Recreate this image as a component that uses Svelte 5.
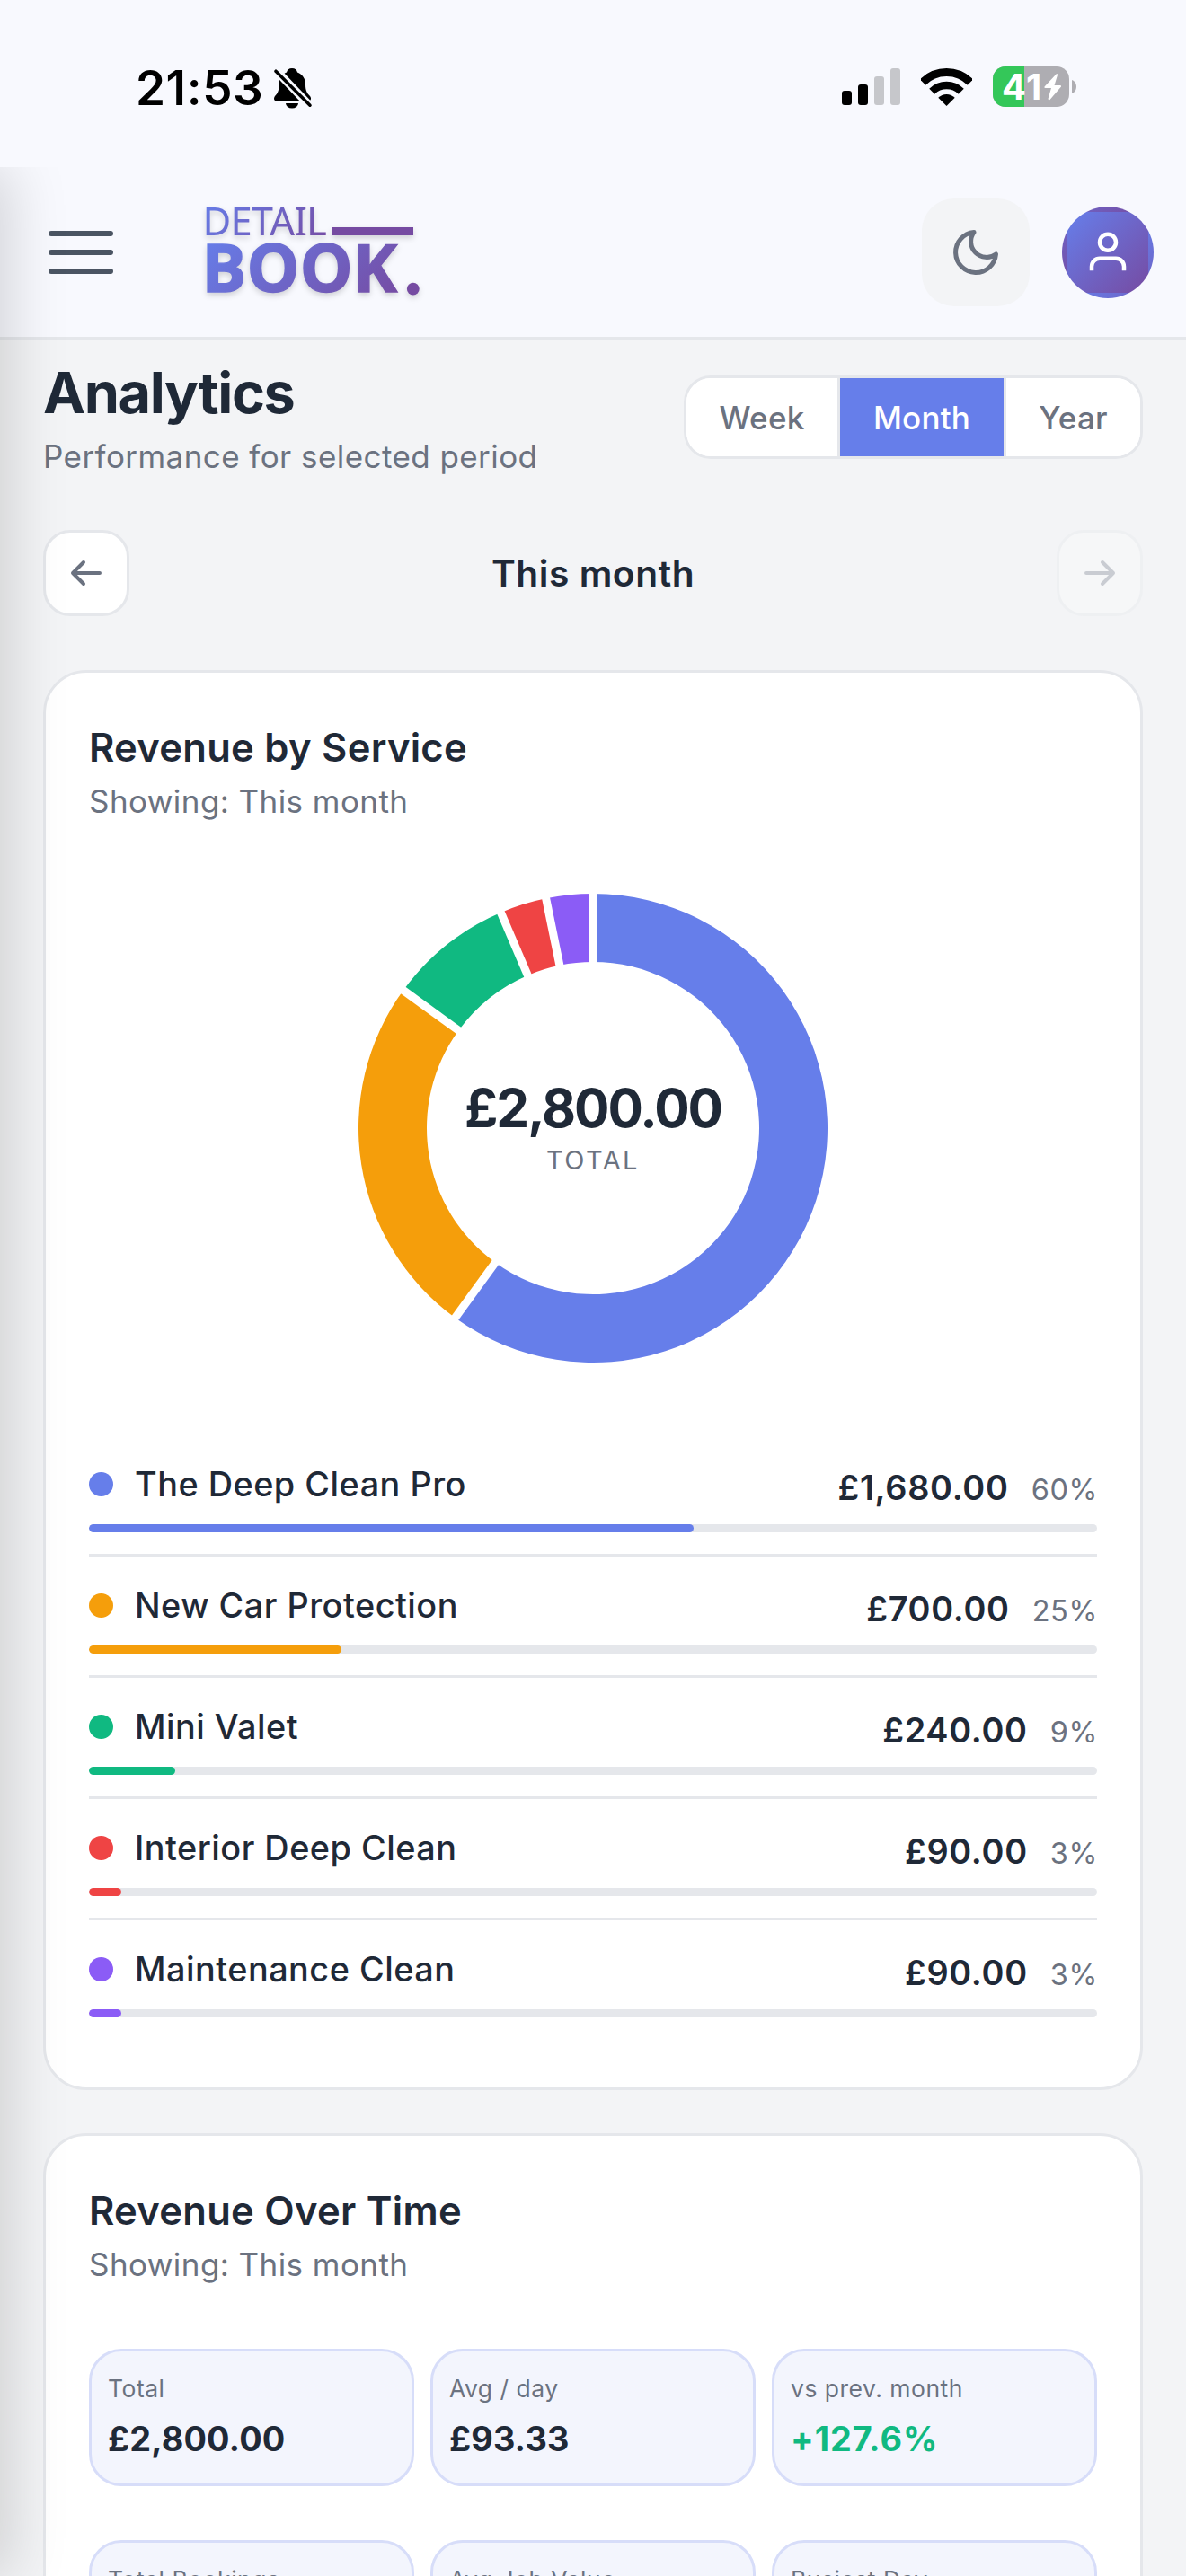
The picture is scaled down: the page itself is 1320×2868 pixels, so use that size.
<script>
    const periods = ['Week', 'Month', 'Year'];
    let active = 'Month';

    const services = [
        { name: 'The Deep Clean Pro', amount: 1680, color: '#667eea' },
        { name: 'New Car Protection', amount: 700, color: '#f59e0b' },
        { name: 'Mini Valet', amount: 240, color: '#10b981' },
        { name: 'Interior Deep Clean', amount: 90, color: '#ef4444' },
        { name: 'Maintenance Clean', amount: 90, color: '#8b5cf6' },
    ];

    const stats = [
        { label: 'Total', value: '£2,800.00' },
        { label: 'Avg / day', value: '£93.33' },
        { label: 'vs prev. month', value: '+127.6%', positive: true },
    ];

    // values of this row sit below the fold
    const moreStats = [
        { label: 'Total Bookings' },
        { label: 'Avg Job Value' },
        { label: 'Busiest Day' },
    ];

    const total = services.reduce((sum, s) => sum + s.amount, 0);
    const money = (n) => '£' + n.toLocaleString('en-GB', { minimumFractionDigits: 2 });
    const share = (n) => (n / total) * 100;

    // donut geometry
    const size = 522;
    const c = size / 2;
    const outer = 261;
    const inner = 185;

    const point = (r, turn) => {
        const a = turn * Math.PI * 2 - Math.PI / 2;
        return [c + r * Math.cos(a), c + r * Math.sin(a)];
    };

    const slicePath = (from, to) => {
        const large = to - from > 0.5 ? 1 : 0;
        return `M${point(outer, from)} A${outer} ${outer} 0 ${large} 1 ${point(outer, to)} L${point(inner, to)} A${inner} ${inner} 0 ${large} 0 ${point(inner, from)}Z`;
    };

    let turn = 0;
    const slices = services.map((s) => {
        const from = turn;
        turn += s.amount / total;
        return { color: s.color, d: slicePath(from, turn), gap: `M${point(inner - 4, from)} L${point(outer + 4, from)}` };
    });
</script>

<div class="screen">
    <div class="statusBar">
        <span class="time">21:53</span>
        <svg class="bell" width="44" height="47" viewBox="0 0 44 47">
            <path d="M21 1C24.500 1 26.500 3 27 5.500C33 8 36 13 36 19.500C36 26 38 29 41 32C43 34.500 42 37.500 39 37.500H4C1 37.500 .2 34.500 2 32C5 29 6.500 26 6.500 19.500C6.500 13 9 8 15 5.500C15.500 3 17.500 1 21 1Z" />
            <path d="M14 40h14a7 5.500 0 0 1-14 0z" />
            <path class="halo" d="M0 0L43 45" />
            <path class="slash" d="M3 4.200L41 42.200" />
        </svg>
        <div class="statusIcons">
            <svg width="65" height="41" viewBox="0 0 65 41">
                <rect x="0" y="25" width="11" height="16" rx="3" />
                <rect x="18" y="18" width="11" height="23" rx="3" />
                <rect x="36" y="9" width="11" height="32" rx="3" fill="#c6c7cb" />
                <rect x="54" y="0" width="11" height="41" rx="3" fill="#c6c7cb" />
            </svg>
            <svg width="57" height="42" viewBox="0 0 57 42">
                <clipPath id="fan"><path d="M28.500 42L-14 -.5H71Z" /></clipPath>
                <g clip-path="url(#fan)">
                    <circle cx="28.500" cy="42" r="37.500" fill="none" stroke="#000" stroke-width="9" />
                    <circle cx="28.500" cy="42" r="23" fill="none" stroke="#000" stroke-width="8.500" />
                    <circle cx="28.500" cy="42" r="13" />
                </g>
            </svg>
            <svg width="93" height="45" viewBox="0 0 93 45">
                <clipPath id="cell"><rect width="85" height="45" rx="14" /></clipPath>
                <g clip-path="url(#cell)">
                    <rect width="85" height="45" fill="#aeadb2" />
                    <rect width="35" height="45" fill="#34c759" />
                </g>
                <path d="M88 15c3 1 5 4 5 7.500s-2 6.500-5 7.500z" fill="#aeadb2" />
                <text class="charge" x="10" y="37">41</text>
                <path d="M71 8L57.500 22.500Q57 24 58.500 24H65L61.500 36Q62 38 63.500 37L76 22.500Q76.500 21 75 21H68.500L72 9.500Q72 7.500 71 8Z" fill="#fff" />
            </svg>
        </div>
    </div>

    <div class="page">
        <header class="topBar">
            <div class="burger"><i></i><i></i><i></i></div>
            <svg class="logo" width="260" height="120" viewBox="220 221 260 120">
                <linearGradient id="thin" gradientUnits="userSpaceOnUse" x1="247" y1="201" x2="341" y2="295">
                    <stop offset="0" stop-color="#667eea" /><stop offset="1" stop-color="#764ba2" />
                </linearGradient>
                <linearGradient id="thick" gradientUnits="userSpaceOnUse" x1="263" y1="228" x2="407" y2="372">
                    <stop offset="0" stop-color="#667eea" /><stop offset="1" stop-color="#764ba2" />
                </linearGradient>
                <text class="detail" x="225.500" y="262" fill="url(#thin)">DETAIL</text>
                <text class="book" x="224.500" y="325" fill="url(#thick)" stroke="url(#thick)">BOOK</text>
                <rect x="370" y="253" width="90" height="9" fill="#764ba2" />
                <circle cx="459.800" cy="321.700" r="6.900" fill="#764ba2" />
            </svg>
            <div class="themeToggle">
                <svg width="60" height="60" viewBox="0 0 24 24" fill="none" stroke="#6b7280" stroke-width="2" stroke-linecap="round" stroke-linejoin="round">
                    <path d="M21 12.790A9 9 0 1 1 11.210 3 7 7 0 0 0 21 12.790z" />
                </svg>
            </div>
            <div class="avatar">
                <svg width="54" height="54" viewBox="0 0 24 24" fill="none" stroke="#fff" stroke-width="2">
                    <path d="M20 21v-2a4 4 0 0 0-4-4H8a4 4 0 0 0-4 4v2" />
                    <circle cx="12" cy="7" r="4" />
                </svg>
            </div>
        </header>

        <main>
            <div class="heading">
                <div>
                    <h1>Analytics</h1>
                    <p class="sub">Performance for selected period</p>
                </div>
                <div class="segments">
                    {#each periods as period}
                        <button class:active={period === active} on:click={() => (active = period)}>{period}</button>
                    {/each}
                </div>
            </div>

            <div class="periodNav">
                <button class="step" aria-label="Previous">
                    <svg width="42" height="42" viewBox="0 0 42 42"><path d="M36 21H6M18 9L6 21L18 33" /></svg>
                </button>
                <strong>This month</strong>
                <button class="step" aria-label="Next" disabled>
                    <svg width="42" height="42" viewBox="0 0 42 42"><path d="M6 21H36M24 9L36 21L24 33" /></svg>
                </button>
            </div>

            <section class="card">
                <h2>Revenue by Service</h2>
                <p class="sub cardSub">Showing: This month</p>
                <div class="donut">
                    <svg width={size} height={size} viewBox="0 0 {size} {size}">
                        {#each slices as slice}
                            <path d={slice.d} fill={slice.color} />
                        {/each}
                        {#each slices as slice}
                            <path d={slice.gap} stroke="#fff" stroke-width="9" />
                        {/each}
                    </svg>
                    <div class="donutLabel">
                        <b>{money(total)}</b>
                        <span>TOTAL</span>
                    </div>
                </div>
                <div class="legend">
                    {#each services as service}
                        <div class="legendRow">
                            <div class="legendHead">
                                <i class="dot" style="background: {service.color}"></i>
                                <span class="name">{service.name}</span>
                                <div class="figures">
                                    <b>{money(service.amount)}</b>
                                    <span>{Math.round(share(service.amount))}%</span>
                                </div>
                            </div>
                            <div class="track">
                                <div class="fill" style="width: {share(service.amount)}%; background: {service.color}"></div>
                            </div>
                        </div>
                    {/each}
                </div>
            </section>

            <section class="card">
                <h2>Revenue Over Time</h2>
                <p class="sub cardSub">Showing: This month</p>
                {#each [stats, moreStats] as group}
                    <div class="stats">
                        {#each group as stat}
                            <div class="stat">
                                <span>{stat.label}</span>
                                {#if stat.value}
                                    <b class:positive={stat.positive}>{stat.value}</b>
                                {/if}
                            </div>
                        {/each}
                    </div>
                {/each}
            </section>
        </main>

        <!-- closed drawer, only its shadow reaches the page -->
        <div class="drawer"></div>
    </div>
</div>

<style>
    :global(body) {
        margin: 0;
    }
    .screen {
        width: 1320px;
        height: 2868px;
        overflow: hidden;
        box-sizing: border-box;
        background: #f8f9fe;
        color: #1f2937;
        font-family: Inter, "Liberation Sans", sans-serif;
    }
    .screen * {
        box-sizing: border-box;
    }
    svg {
        display: block;
        flex: none;
    }
    h1, h2, p {
        margin: 0;
    }
    button {
        font: inherit;
        padding: 0;
    }

    .statusBar {
        display: flex;
        align-items: center;
        height: 186px;
        padding: 66px 122px 56px 151px;
        color: #000;
    }
    .time {
        width: 153px;
        font-size: 53px;
        font-weight: 600;
        line-height: 64px;
        letter-spacing: 0.6px;
    }
    .halo {
        stroke: #f8f9fe;
        stroke-width: 9;
    }
    .slash {
        stroke: #000;
        stroke-width: 3.6;
        stroke-linecap: round;
    }
    .statusIcons {
        display: flex;
        align-items: center;
        gap: 23px;
        margin-left: auto;
        padding-bottom: 3px;
    }
    .charge {
        font-size: 40px;
        font-weight: 700;
        letter-spacing: 1.5px;
        fill: #fff;
    }

    .page {
        position: relative;
        height: 2682px;
        overflow: hidden;
        background: #f3f4f6;
    }
    .drawer {
        position: absolute;
        top: 0;
        bottom: 0;
        left: -840px;
        width: 840px;
        box-shadow: 12px 0 60px rgba(0, 0, 0, 0.15);
    }
    .topBar {
        display: flex;
        align-items: center;
        height: 192px;
        padding: 35px 36px 34px 54px;
        background: #f8f9fe;
        border-bottom: 3px solid #e5e7eb;
    }
    .burger {
        display: flex;
        flex-direction: column;
        justify-content: space-between;
        width: 72px;
        height: 48px;
    }
    .burger i {
        height: 6px;
        border-radius: 3px;
        background: #4b5563;
    }
    .logo {
        margin-left: 94px;
        filter: drop-shadow(0 3px 3px rgba(0, 0, 0, 0.16));
    }
    .detail {
        font: 400 43.5px "Noto Sans", sans-serif;
        letter-spacing: -0.8px;
    }
    .book {
        font: 700 74px "Open Sans", "Noto Sans", sans-serif;
        letter-spacing: 0.3px;
        stroke-width: 1.4;
    }
    .themeToggle {
        display: flex;
        align-items: center;
        justify-content: center;
        width: 120px;
        height: 120px;
        margin-left: auto;
        border-radius: 36px;
        background: #f3f4f6;
    }
    .avatar {
        display: flex;
        align-items: center;
        justify-content: center;
        width: 102px;
        height: 102px;
        margin-left: 36px;
        border: 6px solid transparent;
        border-radius: 50%;
        background: linear-gradient(135deg, #667eea, #764ba2);
    }

    main {
        padding: 24px 48px;
    }
    .heading {
        display: flex;
        justify-content: space-between;
        align-items: flex-start;
        height: 130px;
    }
    h1 {
        font-size: 63px;
        font-weight: 700;
        line-height: 71px;
        letter-spacing: -1.4px;
    }
    .sub {
        margin-top: 11px;
        font-size: 35px;
        line-height: 48px;
        letter-spacing: 0.43px;
        color: #6b7280;
    }
    .segments {
        display: grid;
        grid-template-columns: 171px 185px 149px;
        height: 93px;
        margin-top: 16px;
        border: 3px solid #e5e7eb;
        border-radius: 30px;
        overflow: hidden;
        background: #fff;
    }
    .segments button {
        border: 0;
        border-right: 3px solid #e5e7eb;
        background: #fff;
        color: #6b7280;
        font-size: 35px;
        font-weight: 500;
        line-height: 87px;
        letter-spacing: 0.2px;
        padding-top: 1px;
    }
    .segments button:last-child {
        border-right: 0;
    }
    .segments button.active {
        background: #667eea;
        color: #fff;
    }

    .periodNav {
        display: flex;
        align-items: center;
        justify-content: space-between;
        margin-top: 58px;
    }
    .periodNav strong {
        font-size: 40.7px;
        font-weight: 600;
        letter-spacing: 0.55px;
    }
    .step {
        display: flex;
        align-items: center;
        justify-content: center;
        width: 96px;
        height: 96px;
        border: 3px solid #e5e7eb;
        border-radius: 30px;
        background: #fff;
    }
    .step path {
        fill: none;
        stroke: #6b7280;
        stroke-width: 4;
        stroke-linecap: round;
        stroke-linejoin: round;
    }
    .step:disabled {
        opacity: 0.3;
    }

    .card {
        margin-top: 60px;
        padding: 48px;
        border: 3px solid #e5e7eb;
        border-radius: 48px;
        background: #fff;
    }
    .card + .card {
        margin-top: 48px;
    }
    h2 {
        font-size: 43.5px;
        font-weight: 600;
        line-height: 70px;
        letter-spacing: 0.28px;
    }
    .cardSub {
        margin-top: 0;
        line-height: 50px;
    }
    .donut {
        position: relative;
        width: 522px;
        height: 522px;
        margin: 78px auto 81px;
    }
    .donutLabel {
        position: absolute;
        inset: 0;
        display: flex;
        flex-direction: column;
        align-items: center;
        justify-content: center;
        padding-top: 2px;
    }
    .donutLabel b {
        font-size: 58.5px;
        line-height: 70px;
        letter-spacing: -2px;
    }
    .donutLabel span {
        font-size: 29px;
        line-height: 46px;
        letter-spacing: 2.4px;
        color: #6b7280;
    }

    .legend {
        padding-bottom: 6px;
    }
    .legendRow {
        padding: 24px 0;
        border-bottom: 3px solid #e5e7eb;
    }
    .legendRow:last-child {
        border-bottom: 0;
    }
    .legendHead {
        display: flex;
        align-items: center;
        height: 61px;
        margin-bottom: 14px;
    }
    .dot {
        width: 27px;
        height: 27px;
        border-radius: 50%;
    }
    .name {
        margin-left: 24px;
        padding-bottom: 2px;
        font-size: 37.8px;
        font-weight: 500;
        letter-spacing: 0.5px;
    }
    .figures {
        display: flex;
        align-items: baseline;
        gap: 25px;
        margin-left: auto;
        margin-right: -1px;
        padding-top: 6px;
    }
    .figures b {
        font-size: 37.8px;
        font-weight: 600;
        line-height: 50px;
        letter-spacing: 0.7px;
    }
    .figures span {
        font-size: 32.5px;
        line-height: 40px;
        letter-spacing: 0.6px;
        color: #6b7280;
    }
    .track {
        height: 9px;
        border-radius: 5px;
        overflow: hidden;
        background: #e5e7eb;
    }
    .fill {
        height: 9px;
        border-radius: 5px;
    }

    .stats {
        display: grid;
        grid-template-columns: repeat(3, 1fr);
        gap: 18px;
        margin-top: 69px;
    }
    .stats + .stats {
        margin-top: 60px;
    }
    .stat {
        display: flex;
        flex-direction: column;
        height: 153px;
        padding: 21px 18px;
        border: 3px solid #d7ddf9;
        border-radius: 36px;
        background: #f3f5fd;
    }
    .stat span {
        font-size: 26.5px;
        line-height: 40px;
        letter-spacing: 0.5px;
        color: #6b7280;
    }
    .stat b {
        margin-top: 8px;
        font-size: 37.8px;
        line-height: 56px;
        letter-spacing: 0.1px;
    }
    .stat b.positive {
        letter-spacing: 1px;
        color: #10b981;
    }
</style>
